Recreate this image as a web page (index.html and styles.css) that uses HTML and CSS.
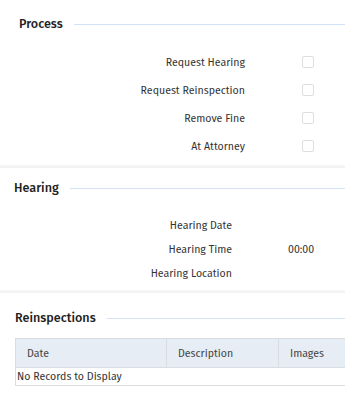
FILE: index.html
```html
<!DOCTYPE html>
<html lang="en">
<head>
    <meta charset="UTF-8">
    <meta name="viewport" content="width=device-width, initial-scale=1.0">
    <title>Case Details</title>
    <link rel="stylesheet" href="styles.css">
</head>
<body>
    <div class="section process-section">
        <h2 class="section-title">Process</h2>
        <div class="field-list process-list">
            <div class="field-row">
                <span class="field-label">Request Hearing</span>
                <span class="check-box"></span>
            </div>
            <div class="field-row">
                <span class="field-label">Request Reinspection</span>
                <span class="check-box"></span>
            </div>
            <div class="field-row">
                <span class="field-label">Remove Fine</span>
                <span class="check-box"></span>
            </div>
            <div class="field-row">
                <span class="field-label">At Attorney</span>
                <span class="check-box"></span>
            </div>
        </div>
    </div>
    <div class="section-divider"></div>

    <div class="section hearing-section">
        <h2 class="section-title">Hearing</h2>
        <div class="field-list hearing-list">
            <div class="field-row">
                <span class="field-label">Hearing Date</span>
                <span class="field-value"></span>
            </div>
            <div class="field-row">
                <span class="field-label">Hearing Time</span>
                <span class="field-value">00:00</span>
            </div>
            <div class="field-row">
                <span class="field-label">Hearing Location</span>
                <span class="field-value"></span>
            </div>
        </div>
    </div>
    <div class="section-divider"></div>

    <div class="section reinspection-section">
        <h2 class="section-title">Reinspections</h2>
        <div class="table-wrap">
            <table class="records-table">
                <thead>
                    <tr>
                        <th class="col-date">Date</th>
                        <th class="col-desc">Description</th>
                        <th class="col-images">Images</th>
                    </tr>
                </thead>
                <tbody>
                    <tr>
                        <td colspan="3" class="empty-row">No Records to Display</td>
                    </tr>
                </tbody>
            </table>
        </div>
    </div>
</body>
</html>
```
FILE: styles.css
```css
html, body {
    margin: 0;
    padding: 0;
    overflow: hidden;
    background: #fff;
}

body {
    font-family: "Fira Sans", Roboto, "Liberation Sans", sans-serif;
    font-size: 10.6px;
    color: #333;
}

.section-title {
    display: flex;
    align-items: center;
    margin: 0;
    font-size: 12.6px;
    line-height: 16px;
    font-weight: 500;
    color: #222;
}

.section-title::after {
    content: "";
    flex: 1;
    height: 1px;
    margin-left: 11px;
    background: #d3e2f6;
}

.process-section {
    padding: 16px 0 4px 19px;
}

.hearing-section {
    padding: 12px 0 4px 14px;
}

.reinspection-section {
    padding: 17px 0 0 15px;
}

.section-divider {
    height: 3px;
    margin-top: 1px;
    background: linear-gradient(#f8f8f8, #f0f0f0);
}

.field-list {
    display: flex;
    flex-direction: column;
}

.process-list {
    margin-top: 16px;
}

.hearing-list {
    margin-top: 17px;
}

.field-row {
    display: flex;
    align-items: center;
}

.process-list .field-row {
    height: 28px;
}

.hearing-list .field-row {
    height: 24px;
}

.field-label {
    text-align: right;
}

.process-list .field-label {
    width: 226px;
}

.hearing-list .field-label {
    width: 218px;
}

.check-box {
    width: 10px;
    height: 10px;
    margin-left: 57px;
    border: 1px solid #dedede;
    border-radius: 2px;
}

.field-value {
    margin-left: 56px;
}

.table-wrap {
    margin-top: 12px;
    overflow: hidden;
}

.records-table {
    width: 340px;
    border-collapse: collapse;
    border: 1px solid #dcdcdc;
    border-right: none;
}

.records-table th {
    height: 28px;
    padding: 0 0 0 11px;
    background: #e6edf5;
    border-right: 1px solid #d8dde4;
    border-bottom: 1px solid #d8dde4;
    text-align: left;
    font-weight: normal;
    color: #444;
}

.records-table .col-images {
    border-right: none;
}

.col-date {
    width: 139px;
}

.col-desc {
    width: 100px;
}

.empty-row {
    height: 17px;
    padding: 0 0 0 1px;
    color: #333;
}
```
